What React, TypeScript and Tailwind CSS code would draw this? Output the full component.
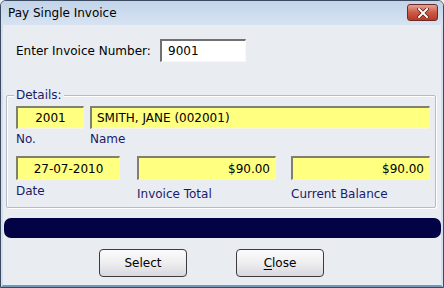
import React from "react";

const font = { fontFamily: "Tahoma, 'DejaVu Sans', sans-serif" };

const yellow =
  "bg-[#ffff80] border-t-2 border-l-2 border-b border-r border-t-[#808070] border-l-[#808070] border-b-[#f4f4e0] border-r-[#f4f4e0] flex items-center text-[12px] text-black";

export default function App() {
  return (
    <div className="w-[444px] h-[288px] bg-[#e9edf2] flex flex-col overflow-hidden" style={font}>
      <div className="h-[288px] border border-[#3b4a5e] rounded-t-[6px] flex flex-col overflow-hidden">
        {/* title bar */}
        <div className="h-[24px] shrink-0 bg-gradient-to-b from-[#c2d4ea] to-[#d7e3f1] flex items-center pl-[7px] pr-[5px] relative">
          <span className="text-[12px] text-black leading-none">Pay Single Invoice</span>
          <div className="ml-auto w-[31px] h-[17px] mt-[-1px] rounded-[3px] border border-[#6b2a22] bg-gradient-to-b from-[#e6a195] via-[#cb5a47] to-[#b83a26] flex items-center justify-center">
            <svg width="12" height="10" viewBox="0 0 12 10">
              <path d="M2 1 L10 9 M10 1 L2 9" stroke="#5a1b10" strokeWidth="3.4" strokeLinecap="square" />
              <path d="M2 1 L10 9 M10 1 L2 9" stroke="#ffffff" strokeWidth="2" strokeLinecap="square" />
            </svg>
          </div>
        </div>
        {/* client */}
        <div className="flex-1 bg-[#e9edf2] border-x-[2px] border-b-[2px] border-x-[#d3dfee] border-b-[#6f9bb8] flex flex-col pl-[1px] pr-[1px]">
          <div className="flex items-center mt-[14px] h-[23px]">
            <span className="ml-[12px] w-[144px] text-[12px] text-black">Enter Invoice Number:</span>
            <div className="w-[86px] h-[23px] bg-white border-t-2 border-l-2 border-b border-r border-t-[#707070] border-l-[#707070] border-b-[#f8f8f8] border-r-[#f8f8f8] flex items-center pl-[6px] text-[12px] text-black">
              9001
            </div>
          </div>
          {/* group box */}
          <div className="relative mt-[33px] ml-[2px] w-[430px] h-[113px] border border-[#b5bcc6] rounded-[2px] shadow-[inset_1px_1px_0_#ffffff,1px_1px_0_#ffffff]">
            <span className="absolute left-[7px] top-[-9px] px-[2px] bg-[#e9edf2] text-[12px] leading-[16px] text-[#1a1a6a]">Details:</span>
            <div className="flex mt-[10px] ml-[9px] gap-[6px]">
              <div className="flex flex-col">
                <div className={`w-[68px] h-[23px] justify-center ${yellow}`}>2001</div>
                <span className="text-[12px] text-[#1a1a6a] mt-[2px] leading-[16px]">No.</span>
              </div>
              <div className="flex flex-col">
                <div className={`w-[340px] h-[23px] justify-start pl-[5px] ${yellow}`}>SMITH, JANE (002001)</div>
                <span className="text-[12px] text-[#1a1a6a] mt-[2px] leading-[16px]">Name</span>
              </div>
            </div>
            <div className="flex mt-[9px] ml-[9px]">
              <div className="flex flex-col w-[104px]">
                <div className={`h-[24px] w-[104px] justify-center ${yellow}`}>27-07-2010</div>
                <span className="text-[12px] text-[#1a1a6a] mt-[3px] leading-[16px]">Date</span>
              </div>
              <div className="flex flex-col ml-[17px] w-[139px]">
                <div className={`h-[24px] w-[139px] justify-end pr-[5px] ${yellow}`}>$90.00</div>
                <span className="text-[12px] text-[#1a1a6a] mt-[6px] leading-[16px]">Invoice Total</span>
              </div>
              <div className="flex flex-col ml-[15px] w-[139px]">
                <div className={`h-[24px] w-[139px] justify-end pr-[5px] ${yellow}`}>$90.00</div>
                <span className="text-[12px] text-[#1a1a6a] mt-[6px] leading-[16px]">Current Balance</span>
              </div>
            </div>
          </div>
          {/* dark bar */}
          <div className="mt-[10px] ml-0 w-[437px] h-[20px] rounded-[7px] bg-[#020244]" />
          {/* buttons */}
          <div className="flex mt-[11px] ml-[95px] gap-[49px]">
            <button className="w-[88px] h-[28px] rounded-[4px] border border-[#3c3c3c] bg-gradient-to-b from-[#fbfbfb] via-[#eeeef0] to-[#d8d8de] text-[12px] text-black" style={font}>
              Select
            </button>
            <button className="w-[88px] h-[28px] rounded-[4px] border border-[#3c3c3c] bg-gradient-to-b from-[#fbfbfb] via-[#eeeef0] to-[#d8d8de] text-[12px] text-black" style={font}>
              <span className="underline underline-offset-2">C</span>lose
            </button>
          </div>
        </div>
      </div>
    </div>
  );
}
